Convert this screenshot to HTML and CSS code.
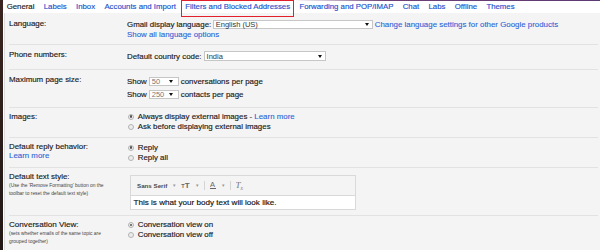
FILE: index.html
```html
<!DOCTYPE html>
<html lang="en">
<head>
  <meta charset="UTF-8">
  <title>Settings</title>
  <link rel="stylesheet" href="styles.css">
</head>
<body>
  <div class="page">
    <div class="edge"></div>
    <div class="main">
      <nav class="tabs">
        <a class="tab current">General</a>
        <a class="tab">Labels</a>
        <a class="tab">Inbox</a>
        <a class="tab">Accounts and Import</a>
        <a class="tab marked">Filters and Blocked Addresses</a>
        <a class="tab">Forwarding and POP/IMAP</a>
        <a class="tab">Chat</a>
        <a class="tab">Labs</a>
        <a class="tab">Offline</a>
        <a class="tab">Themes</a>
      </nav>

      <div class="panel">
        <div class="row row-lang">
          <div class="label">Language:</div>
          <div class="value">
            <div class="line">
              Gmail display language:
              <span class="select select-lang">English (US)</span>
              <a class="link">Change language settings for other Google products</a>
            </div>
            <div class="line"><a class="link">Show all language options</a></div>
          </div>
        </div>

        <div class="row row-phone">
          <div class="label">Phone numbers:</div>
          <div class="value">
            <div class="line tall">
              Default country code:
              <span class="select select-country">India</span>
            </div>
          </div>
        </div>

        <div class="row row-size">
          <div class="label">Maximum page size:</div>
          <div class="value">
            <div class="line tall">Show <span class="select select-num">50</span> conversations per page</div>
            <div class="line tall">Show <span class="select select-num">250</span> contacts per page</div>
          </div>
        </div>

        <div class="row row-images">
          <div class="label">Images:</div>
          <div class="value">
            <div class="line"><span class="radio checked"></span>Always display external images -&nbsp;<a class="link">Learn more</a></div>
            <div class="line"><span class="radio"></span>Ask before displaying external images</div>
          </div>
        </div>

        <div class="row row-reply">
          <div class="label">
            <div class="label-line">Default reply behavior:</div>
            <div class="label-line"><a class="link">Learn more</a></div>
          </div>
          <div class="value">
            <div class="line"><span class="radio checked"></span>Reply</div>
            <div class="line"><span class="radio"></span>Reply all</div>
          </div>
        </div>

        <div class="row row-style">
          <div class="label">
            <div>Default text style:</div>
            <div class="note">(Use the 'Remove Formatting' button on the<br>toolbar to reset the default text style)</div>
          </div>
          <div class="value">
            <div class="editor">
              <div class="toolbar">
                <span class="tool font-name">Sans Serif</span>
                <span class="caret">&#9662;</span>
                <span class="tool size-icon"><span class="small-t">T</span>T</span>
                <span class="caret">&#9662;</span>
                <span class="divider"></span>
                <span class="tool color-icon">A</span>
                <span class="caret">&#9662;</span>
                <span class="divider"></span>
                <span class="tool clear-icon">T<span class="clear-x">x</span></span>
              </div>
              <div class="editor-body">This is what your body text will look like.</div>
            </div>
          </div>
        </div>

        <div class="row row-conv">
          <div class="label">
            <div class="label-big">Conversation View:</div>
            <div class="note">(sets whether emails of the same topic are<br>grouped together)</div>
          </div>
          <div class="value">
            <div class="line"><span class="radio checked"></span>Conversation view on</div>
            <div class="line"><span class="radio"></span>Conversation view off</div>
          </div>
        </div>
      </div>
    </div>
  </div>
</body>
</html>
```

FILE: styles.css
```css
html, body {
  margin: 0;
  padding: 0;
  width: 600px;
  height: 250px;
  overflow: hidden;
}

body {
  font-family: "Liberation Sans", Arial, sans-serif;
  font-size: 7.9px;
  color: #1a1a1a;
  background: #fff;
  -webkit-text-stroke: 0.15px currentColor;
}

.page {
  display: flex;
  height: 250px;
}

.edge {
  flex: none;
  width: 3px;
  background: linear-gradient(#3a2520, #221816);
}

.main {
  flex: 1;
  display: flex;
  flex-direction: column;
  position: relative;
}

/* theme stripe peeking over the top of the tab bar */
.main::before {
  content: "";
  position: absolute;
  top: 0;
  left: 290px;
  right: 0;
  height: 1px;
  background: linear-gradient(to right, rgba(120, 70, 130, 0), #6d4077 30%, #5c3a72);
}

.tabs {
  height: 13px;
  display: flex;
  align-items: center;
  gap: 9.3px;
  padding-left: 3.7px;
  background: #fff;
  font-size: 7.8px;
}

.tab {
  color: #1c52cc;
  text-decoration: none;
  white-space: nowrap;
  line-height: 13px;
}

.tab.current {
  color: #1a1a1a;
}

.tab.marked {
  position: relative;
}

.tab.marked::after {
  content: "";
  position: absolute;
  left: -4.3px;
  right: -4px;
  top: 0;
  height: 17.3px;
  border: 1.3px solid #e2202b;
  box-sizing: border-box;
}

.panel {
  flex: 1;
  margin-left: 1px;
  background: #f4f4f4;
  border-left: 1px solid #dcdcdc;
  padding: 0 2.3px 0 4px;
}

.row {
  display: grid;
  grid-template-columns: 118px 1fr;
  border-bottom: 1px solid #e2e2e2;
}

.label {
  line-height: 10px;
  white-space: nowrap;
}

.label-line {
  line-height: 9px;
}

.label-big {
  font-size: 8.1px;
  line-height: 11px;
}

.note {
  font-size: 4.9px;
  line-height: 8.2px;
  color: #444;
  -webkit-text-stroke: 0;
}

.line {
  display: flex;
  align-items: center;
  height: 10px;
  white-space: nowrap;
}

.line.tall {
  height: 12.5px;
}

.link {
  color: #2a62d6;
  text-decoration: none;
  -webkit-text-stroke: 0.1px currentColor;
}

.select {
  display: inline-flex;
  align-items: center;
  justify-content: space-between;
  box-sizing: border-box;
  height: 9px;
  margin: 0 2px;
  padding: 0 3px 0 2px;
  background: #fff;
  border: 1px solid #c6c6c6;
  color: #333;
  font-size: 7.5px;
  -webkit-text-stroke: 0;
}

.select::after {
  content: "";
  border-left: 2px solid transparent;
  border-right: 2px solid transparent;
  border-top: 3px solid #111;
}

.select-lang {
  width: 160px;
  margin-left: 1.5px;
}

.select-country {
  width: 122px;
  height: 10px;
}

.select-num {
  width: 30px;
  color: #777;
  padding-right: 5px;
}

.radio {
  flex: none;
  box-sizing: border-box;
  width: 6px;
  height: 6px;
  margin: 0 3.4px 0 1.3px;
  border-radius: 50%;
  border: 1px solid #b3b3b3;
  background: #ececec;
  display: flex;
  align-items: center;
  justify-content: center;
}

.radio.checked::after {
  content: "";
  width: 2.4px;
  height: 2.4px;
  border-radius: 50%;
  background: #555;
}

/* per-row vertical rhythm */
.row-lang {
  padding: 6px 0 5px;
}

.row-phone {
  padding: 5px 0 6px;
}

.row-size {
  padding: 5px 0 6px;
}

.row-size .value {
  margin-top: 1px;
}

.row-images {
  padding: 4px 0 5px;
}

.row-reply {
  padding: 4px 0 4px;
}

.row-reply .value {
  margin-top: 1px;
}

.row-style {
  padding: 4px 0 5px;
}

.row-style .value {
  padding-top: 3px;
}

.row-conv {
  padding: 3px 0 0;
  height: 34px;
}

.row-conv .value {
  margin-top: 1.3px;
}

.editor {
  width: 224px;
  margin-left: 3px;
  border: 1px solid #d9d9d9;
}

.toolbar {
  height: 19px;
  display: flex;
  align-items: center;
  padding-left: 6px;
  border-bottom: 1px solid #d9d9d9;
  color: #555;
  -webkit-text-stroke: 0;
}

.tool {
  white-space: nowrap;
}

.font-name {
  font-size: 6.2px;
  font-weight: bold;
  color: #4a4a4a;
}

.caret {
  font-size: 5px;
  color: #999;
  margin: 0 5px 0 6px;
}

.size-icon {
  font-size: 8px;
  font-weight: bold;
  color: #666;
}

.small-t {
  font-size: 5.5px;
}

.divider {
  width: 1px;
  height: 9px;
  background: #d5d5d5;
  margin: 0 5px 0 0;
}

.color-icon {
  font-size: 7.5px;
  color: #666;
  border-bottom: 1px solid #666;
  line-height: 7px;
  padding: 0 0.5px;
}

.clear-icon {
  font-family: "Liberation Serif", "Times New Roman", serif;
  font-style: italic;
  font-size: 9px;
  color: #777;
  display: inline-flex;
  align-items: flex-end;
}

.clear-x {
  font-size: 5.5px;
  margin-bottom: -1px;
}

.editor-body {
  height: 13px;
  line-height: 13px;
  padding-left: 2.5px;
  background: #fff;
  font-size: 8.1px;
  color: #111;
}
```
